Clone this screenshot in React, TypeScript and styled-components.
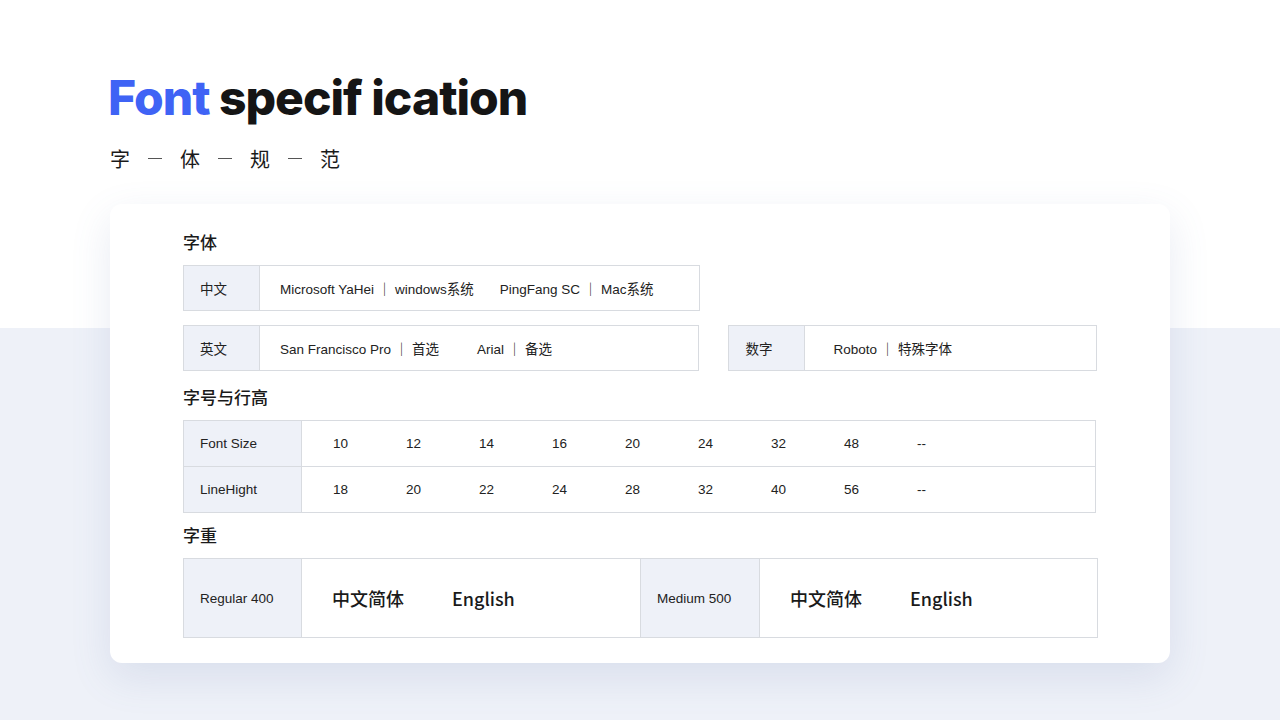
import React from "react";
import styled, { createGlobalStyle } from "styled-components";

const Global = createGlobalStyle`
  html, body { margin: 0; padding: 0; }
  body { font-family: "Liberation Sans", "Noto Sans CJK SC", sans-serif; color: #1a1a1a; }
`;

const Page = styled.div`
  width: 1280px; height: 720px; overflow: hidden;
  background: linear-gradient(#fff 0, #fff 328px, #eef1f8 328px);
  padding: 70px 110px 0 110px; box-sizing: border-box;
`;
const Title = styled.h1`
  margin: 0 0 0 -2px; font-family: Inter, "Noto Sans", sans-serif; font-weight: 800;
  font-size: 48px; line-height: 56px; letter-spacing: -1px; color: #151515;
  span { color: #3f63f5; }
`;
const Sub = styled.div`
  display: flex; align-items: center; gap: 18px; margin-top: 18px;
  font-family: "Noto Sans CJK SC", sans-serif; font-size: 20px; color: #1a1a1a;
  i { width: 14px; height: 1px; background: #555; display: block; }
`;
const Card = styled.div`
  margin-top: 31px; width: 1060px; height: 459px; box-sizing: border-box;
  background: #fff; border-radius: 12px; box-shadow: 0 14px 40px rgba(90,110,170,0.14);
  padding: 26px 73px 0 73px;
`;
const Heading = styled.div`
  font-family: "Noto Sans CJK SC", sans-serif; font-size: 17px; font-weight: 500;
  line-height: 24px; margin-bottom: 11px;
`;
const Line = styled.div<{ mb?: number }>`
  display: flex; gap: 29px; margin-bottom: ${p => p.mb ?? 0}px;
`;
const Box = styled.div<{ w: number }>`
  width: ${p => p.w}px; height: 46px; box-sizing: border-box; border: 1px solid #d8dbe0;
  display: flex; font-size: 13.5px;
`;
const Label = styled.div<{ w: number }>`
  width: ${p => p.w}px; flex: none; background: #eef1f8; border-right: 1px solid #d8dbe0;
  display: flex; align-items: center; padding-left: 16px; box-sizing: border-box;
  font-size: 13.5px; color: #222;
`;
const Content = styled.div<{ gap: number; pl?: number }>`
  display: flex; align-items: center; padding-left: ${p => p.pl ?? 20}px; gap: ${p => p.gap}px; color: #222;
`;
const Table = styled.div`
  width: 913px; border: 1px solid #d8dbe0; box-sizing: border-box; margin-bottom: 10px;
`;
const TRow = styled.div<{ last?: boolean }>`
  display: flex; height: 45px; border-bottom: ${p => (p.last ? "none" : "1px solid #d8dbe0")};
`;
const Num = styled.div`
  width: 73px; flex: none; display: flex; align-items: center; font-size: 13.5px; color: #222;
`;
const Nums = styled.div` display: flex; padding-left: 31px; `;
const Weights = styled.div`
  width: 915px; height: 80px; border: 1px solid #d8dbe0; box-sizing: border-box; display: flex;
`;
const Half = styled.div<{ last?: boolean }>`
  width: 457px; display: flex; border-right: ${p => (p.last ? "none" : "1px solid #d8dbe0")};
`;
const Sample = styled.div`
  display: flex; align-items: center; gap: 48px; padding-left: 30px;
  font-size: 18px; font-weight: 500; font-family: "Noto Sans CJK SC", sans-serif;
`;

const sizes = ["10","12","14","16","20","24","32","48","--"];
const lines = ["18","20","22","24","28","32","40","56","--"];

export default function App() {
  return (
    <Page>
      <Global />
      <Title><span>Font</span> specif ication</Title>
      <Sub>字<i />体<i />规<i />范</Sub>
      <Card>
        <Heading>字体</Heading>
        <Line mb={14}>
          <Box w={517}>
            <Label w={76}>中文</Label>
            <Content gap={26}><span>Microsoft YaHei ｜ windows系统</span><span>PingFang SC ｜ Mac系统</span></Content>
          </Box>
        </Line>
        <Line mb={14}>
          <Box w={517}>
            <Label w={76}>英文</Label>
            <Content gap={38}><span>San Francisco Pro ｜ 首选</span><span>Arial ｜ 备选</span></Content>
          </Box>
          <Box w={369}>
            <Label w={76}>数字</Label>
            <Content gap={0} pl={28}><span>Roboto ｜ 特殊字体</span></Content>
          </Box>
        </Line>
        <Heading>字号与行高</Heading>
        <Table>
          <TRow>
            <Label w={118}>Font Size</Label>
            <Nums>{sizes.map((s, i) => <Num key={i}>{s}</Num>)}</Nums>
          </TRow>
          <TRow last>
            <Label w={118}>LineHight</Label>
            <Nums>{lines.map((s, i) => <Num key={i}>{s}</Num>)}</Nums>
          </TRow>
        </Table>
        <Heading>字重</Heading>
        <Weights>
          <Half>
            <Label w={118}>Regular 400</Label>
            <Sample><span>中文简体</span><span>English</span></Sample>
          </Half>
          <Half last>
            <Label w={119}>Medium 500</Label>
            <Sample><span>中文简体</span><span>English</span></Sample>
          </Half>
        </Weights>
      </Card>
    </Page>
  );
}
